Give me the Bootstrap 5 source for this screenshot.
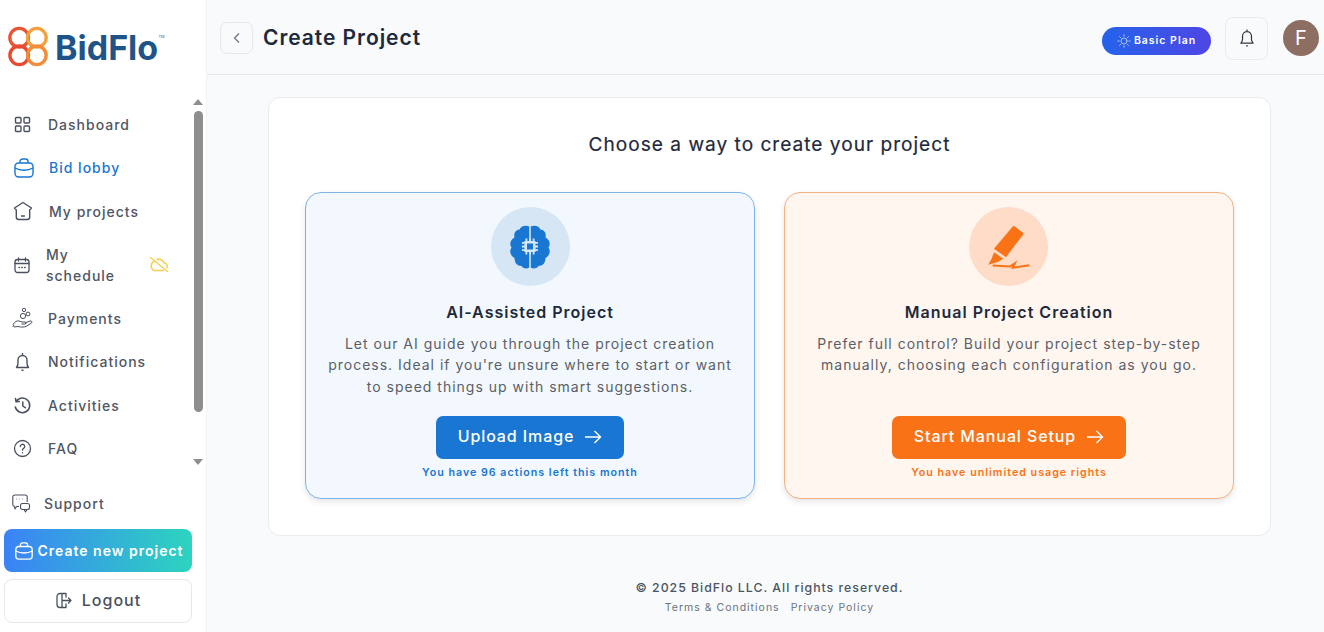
<!DOCTYPE html>
<html lang="en"><head><meta charset="utf-8"><title>Create Project</title>
<link href="https://cdn.jsdelivr.net/npm/bootstrap@5.3.0/dist/css/bootstrap.min.css" rel="stylesheet">
<style>
html,body{height:100%;overflow:hidden}
body{font-family:Inter,"Liberation Sans",sans-serif;background:#f8fafc;color:#1e293b;letter-spacing:1px}
svg{flex:none;display:block}
.side{width:207px;flex:none;height:632px;background:#fff;border-right:1px solid #f1f3f6}
.logo-row{height:97px;padding:26px 0 0 8px;gap:7px}
.logo-word{font-family:Inter,sans-serif;font-weight:700;font-size:34px;line-height:44px;color:#1f5488;letter-spacing:0;position:relative}
.logo-word sup{position:absolute;right:-6.500px;top:9px;font-size:4px;font-weight:400;line-height:1;color:#555}
.nav-area{height:371px;padding-left:13px}
.nav-col{width:174px;padding-top:5.500px}
.nav-entry{height:43.500px;font-size:14px;font-weight:500;color:#505664;gap:16px;text-decoration:none}
.nav-entry.tall{height:63.600px;line-height:21px;gap:15px}
.nav-entry.active{color:#1976d2;gap:14px}
.nav-entry.pay{gap:15px}
.nav-entry .off{margin-left:auto;margin-right:18px}
.ic-out{margin-left:-1px}
.sb{width:12px;margin-left:5px;margin-right:1px;padding-top:2px}
.sb-up{width:0;height:0;border:5px solid transparent;border-top:0;border-bottom:6px solid #8e8e8e;margin:0 auto 6px}
.sb-thumb{width:9px;height:301px;background:#8e8e8e;border-radius:5px;margin:0 auto 47px}
.sb-down{width:0;height:0;border:5px solid transparent;border-bottom:0;border-top:6px solid #8e8e8e;margin:0 auto}
.support{height:36px;margin-top:17px;padding-left:12px;gap:14px;font-size:14px;font-weight:500;color:#505664}
.new-btn,.out-btn{width:188px;margin-left:4px;border-radius:8px;display:flex;align-items:center;justify-content:center;letter-spacing:1px}
.new-btn{height:43px;margin-top:8px;background:linear-gradient(90deg,#3b82f6,#2dd4bf);color:#fff;font-size:14px;font-weight:600;gap:3px;border:0;padding:0 0 0 2px}
.out-btn{height:44px;margin-top:7px;background:#fff;border:1px solid #e5e7eb;color:#4a5060;font-size:16px;font-weight:500;gap:10px;padding:0 0 2px}
.top{height:75px;border-bottom:1px solid #e5e7eb;padding:0 5px 0 13px}
.back{width:33px;height:32px;border:1px solid #e5e7eb;border-radius:7px;background:#f8fafc;margin-top:1px}
.page-title{font-size:21px;font-weight:600;color:#1e293b;margin:0 0 0 10px;line-height:1.2;position:relative;top:1px;letter-spacing:.95px}
.plan{width:109px;height:28px;border-radius:14px;background:linear-gradient(90deg,#2563eb,#4f46e5);color:#fff;font-size:10.500px;font-weight:600;gap:3px;margin-top:7px}
.bell{width:43px;height:43px;border:1px solid #e9ebef;border-radius:8px;margin:2px 15px 0 14px;background:#f8fafc}
.avatar{width:36px;height:36px;border-radius:50%;background:#8d6e63;color:#fff;font-size:20px;letter-spacing:0;margin-top:2px}
.panel{width:1003px;height:439px;margin:22px 0 0 61px;background:#fff;border:1px solid #e8ebf0;border-radius:12px;padding:0 36px}
.panel-h{font-size:19.100px;font-weight:400;color:#1e293b;text-align:center;line-height:24px;margin:34px 0 36px;-webkit-text-stroke:.2px #1e293b}
.opt{width:450px;height:307px;border-radius:16px;padding:14px 16px 0;text-align:center;box-shadow:0 3px 6px rgba(0,0,0,.1)}
.opt-blue{background:#f2f8fe;border:1px solid #7fb5e6}
.opt-orange{background:#fff6f0;border:1px solid #f3b184}
.disc{width:79px;height:79px;border-radius:50%;margin-bottom:16px}
.opt-blue .disc{background:#d6e6f4}
.opt-orange .disc{background:#fedcc8;margin-left:-1px}
.opt-t{font-size:16px;font-weight:600;line-height:20px;color:#1e293b;margin:0 0 10.500px}
.opt-d{font-size:14px;line-height:21.500px;color:#5b5f68;margin:0}
.cta{height:43px;border-radius:7px;border:0;color:#fff;font-size:16px;font-weight:500;gap:10px;padding:0 0 3px;letter-spacing:.9px;display:flex;align-items:center;justify-content:center}
.cta svg{position:relative;top:1px}
.cta-b{width:188px;background:#1976d2}
.cta-o{width:234px;background:#f97316}
.act{margin-top:auto;margin-bottom:18px}
.note{font-size:10.700px;line-height:14px;font-weight:600;margin:7px 0 0}
.note-b{color:#1976d2}.note-o{color:#f97316}
.foot{text-align:center;margin-top:43px;margin-left:61px;width:1003px}
.foot-a{font-size:12.300px;line-height:18px;font-weight:500;color:#4b5563;margin:0 0 3px}
.foot-b{font-size:10.500px;line-height:16px;color:#6b7280;gap:11px}
</style></head>
<body class="d-flex">
<aside class="side d-flex flex-column">
 <div class="logo-row d-flex align-items-start">
  <svg width="40" height="41" viewBox="0 0 43 43" fill="none" stroke-width="3.600"><circle cx="12" cy="12" r="10" stroke="#ea5430"/><circle cx="31" cy="12" r="10" stroke="#f5a03c"/><circle cx="12" cy="31" r="10" stroke="#e84a30"/><circle cx="31" cy="31" r="10" stroke="#f38b38"/></svg>
  <span class="logo-word">BidFlo<sup>TM</sup></span>
 </div>
 <div class="nav-area d-flex">
  <nav class="nav-col">
   <a class="nav-entry d-flex align-items-center" href="#"><svg width="19" height="19" viewBox="0 0 19 19" fill="none" stroke="#4a5060" stroke-width="1.400"><rect x="2.500" y="2.500" width="5.500" height="5.500" rx="1"/><rect x="11" y="2.500" width="5.500" height="5.500" rx="1"/><rect x="2.500" y="11" width="5.500" height="5.500" rx="1"/><rect x="11" y="11" width="5.500" height="5.500" rx="1"/></svg>Dashboard</a>
   <a class="nav-entry active d-flex align-items-center" href="#"><svg width="22" height="22" viewBox="0 0 22 22" fill="none" stroke="#1976d2" stroke-width="1.400"><rect x="2" y="6" width="18" height="14" rx="3.500"/><path d="M7 6V4.500A2.500 2.500 0 0 1 9.500 2h3A2.500 2.500 0 0 1 15 4.500V6M2 11c5 3 13 3 18 0"/></svg>Bid lobby</a>
   <a class="nav-entry d-flex align-items-center" href="#"><svg width="20" height="20" viewBox="0 0 20 20" fill="none" stroke="#4a5060" stroke-width="1.400" stroke-linejoin="round"><path d="M10 1.500 18.500 7l-1.800 2v7a2.500 2.500 0 0 1-2.500 2.500H5.800A2.500 2.500 0 0 1 3.300 16V9L1.500 7z"/><path d="M8.500 15h3" stroke-linecap="round"/></svg>My projects</a>
   <a class="nav-entry tall d-flex align-items-center" href="#"><svg width="18" height="18" viewBox="0 0 18 18" fill="none" stroke="#4a5060" stroke-width="1.300" stroke-linecap="round"><rect x="2" y="3.500" width="14" height="13" rx="2.500"/><path d="M2 7.500h14M5.500 2v3M12.500 2v3M6 11.500h.6M8.800 11.500h.6M11.600 11.500h.6"/></svg><span>My<br>schedule</span><svg class="off" width="20" height="20" viewBox="0 0 20 20" fill="none" stroke="#f7cf4e" stroke-width="1.500" stroke-linecap="round" stroke-linejoin="round"><path d="M5 6.500A5 5 0 0 0 5 15.500h9.500M8 4.500a5.300 5.300 0 0 1 7 3.500 3.500 3.500 0 0 1 3 5M1.500 2.500l17 14"/></svg></a>
   <a class="nav-entry pay d-flex align-items-center" href="#"><svg class="ic-out" width="21" height="22" viewBox="0 0 21 22" fill="none" stroke="#4a5060" stroke-width="1" stroke-linejoin="round"><circle cx="12" cy="3" r="1.700"/><circle cx="11" cy="9" r="2.600"/><circle cx="16" cy="7" r="1.900"/><path d="M1 17.500c2-3 4-4 6-3.500l3 1h3a1 1 0 0 1 0 2H9.500M13 16l5-2c1.500-.5 2.500 1 1.500 2L14 19.500c-2 .8-5 .8-8 0l-4 .5M1 20l1-2.500"/></svg>Payments</a>
   <a class="nav-entry d-flex align-items-center" href="#"><svg width="19" height="20" viewBox="0 0 19 20" fill="none" stroke="#4a5060" stroke-width="1.400" stroke-linecap="round" stroke-linejoin="round"><path d="M3.500 15.500c1-1.300 1.500-2 1.500-4.500V8a4.500 4.500 0 0 1 9 0v3c0 2.500.5 3.200 1.500 4.500zM9.500 1.500v2M9 18.300h1"/></svg>Notifications</a>
   <a class="nav-entry d-flex align-items-center" href="#"><svg width="19" height="19" viewBox="0 0 19 19" fill="none" stroke="#4a5060" stroke-width="1.500" stroke-linecap="round" stroke-linejoin="round"><path d="M3.200 5.500A7.300 7.300 0 1 1 2.300 11M2.500 2.500l.5 3.300 3.300-.4M9.800 6v4l2.700 1.800"/></svg>Activities</a>
   <a class="nav-entry d-flex align-items-center" href="#"><svg width="19" height="19" viewBox="0 0 19 19" fill="none" stroke="#4a5060" stroke-width="1.300" stroke-linecap="round"><circle cx="9.500" cy="9.500" r="8"/><path d="M7.300 7.500a2.200 2.200 0 1 1 3.300 1.900c-.8.400-1.100.9-1.100 1.800M9.500 13.700v.1"/></svg>FAQ</a>
  </nav>
  <div class="sb"><div class="sb-up"></div><div class="sb-thumb"></div><div class="sb-down"></div></div>
 </div>
 <div class="support d-flex align-items-center"><svg width="18" height="19" viewBox="0 0 18 19" fill="none" stroke="#4a5060" stroke-width="1.100" stroke-linejoin="round"><path d="M7 12.500H4.500L3 15l-.5-2.500A2 2 0 0 1 .8 10.500V3A2 2 0 0 1 2.800 1h10.400a2 2 0 0 1 2 2v5"/><rect x="8.500" y="9.500" width="9" height="6" rx="2"/><path d="M12 15.500l1.500 2.500 1.500-2.500M4.500 5h.6M7.500 5h.6M10.500 5h.6"/></svg>Support</div>
 <button class="new-btn"><svg width="20" height="20" viewBox="0 0 22 22" fill="none" stroke="#fff" stroke-width="1.500"><rect x="2" y="6" width="18" height="14" rx="3.500"/><path d="M7 6V4.500A2.500 2.500 0 0 1 9.500 2h3A2.500 2.500 0 0 1 15 4.500V6M2 11c5 3 13 3 18 0"/></svg>Create new project</button>
 <button class="out-btn"><svg width="17" height="19" viewBox="0 0 17 19" fill="none" stroke="#4a5060" stroke-width="1.300" stroke-linecap="round" stroke-linejoin="round"><path d="M6 2.500H5A3 3 0 0 0 2 5.500v8a3 3 0 0 0 3 3h1c.6 0 1-.4 1-1v-12c0-.6-.4-1-1-1zM7 2.500h4v3.500M7 16.500h4V13M8 9.500h8M13.500 7l2.500 2.500L13.500 12"/></svg>Logout</button>
</aside>
<main class="flex-grow-1">
 <header class="top d-flex align-items-center">
  <div class="back d-flex align-items-center justify-content-center"><svg width="10" height="12" viewBox="0 0 10 12" fill="none" stroke="#6b7280" stroke-width="1.200"><path d="M7 1.500 2.500 6 7 10.500"/></svg></div>
  <h1 class="page-title">Create Project</h1>
  <div class="plan d-flex align-items-center justify-content-center ms-auto"><svg width="14" height="14" viewBox="0 0 14 14" fill="none" stroke="#bcd0ff" stroke-width=".9" stroke-linecap="round"><circle cx="7" cy="7" r="3"/><path d="M7 .8v1.400M7 11.800v1.400M.8 7h1.400M11.800 7h1.400M2.600 2.600l1 1M10.400 10.400l1 1M11.400 2.600l-1 1M3.600 10.400l-1 1"/></svg>Basic Plan</div>
  <div class="bell d-flex align-items-center justify-content-center"><svg width="18" height="20" viewBox="0 0 19 20" fill="none" stroke="#333844" stroke-width="1.300" stroke-linecap="round" stroke-linejoin="round"><path d="M3 15.500c1-1.300 1.800-2 1.800-4.500V8a4.700 4.700 0 0 1 9.400 0v3c0 2.500.8 3.200 1.800 4.500zM9.500 1.500v1.500M9 18.300h1"/></svg></div>
  <div class="avatar d-flex align-items-center justify-content-center">F</div>
 </header>
 <section class="panel">
  <h2 class="panel-h">Choose a way to create your project</h2>
  <div class="d-flex justify-content-between">
   <article class="opt opt-blue d-flex flex-column align-items-center">
    <div class="disc d-flex align-items-center justify-content-center"><svg width="42" height="44" viewBox="0 0 42 44"><g fill="#1976d2"><path d="M20.200 1.500C17 .2 12.500.5 10.500 4.500 6.500 4.800 4.500 8.500 5.500 12.500 1.500 14.500 0 19 2.500 22.500 0 26 1.500 31 5.500 33 5.500 38 8.500 41 12.500 41 14.500 44 18.500 44 20.200 42.500z"/><path d="M21.800 1.500C25 .2 29.500.5 31.500 4.500 35.500 4.800 37.500 8.500 36.500 12.500 40.500 14.500 42 19 39.500 22.500 42 26 40.500 31 36.500 33 36.500 38 33.500 41 29.500 41 27.500 44 23.500 44 21.800 42.500z"/></g><g fill="#d6e6f4"><rect x="15.500" y="16" width="11" height="11"/><path d="M16.500 13.500h1.800v3h-1.800zM20.100 13.500h1.800v3h-1.800zM23.700 13.500h1.800v3h-1.800zM16.500 26.500h1.800v3h-1.800zM20.100 26.500h1.800v3h-1.800zM23.700 26.500h1.800v3h-1.800zM13 17h3v1.800h-3zM13 20.600h3v1.800h-3zM13 24.200h3v1.800h-3zM26 17h3v1.800h-3zM26 20.600h3v1.800h-3zM26 24.200h3v1.800h-3z"/></g><rect x="18" y="18.500" width="6" height="6" fill="#1976d2"/></svg></div>
    <h3 class="opt-t">AI-Assisted Project</h3>
    <p class="opt-d">Let our AI guide you through the project creation process. Ideal if you're unsure where to start or want to speed things up with smart suggestions.</p>
    <div class="act"><button class="cta cta-b mx-auto">Upload Image <svg width="18" height="14" viewBox="0 0 18 14" fill="none" stroke="#fff" stroke-width="1.400"><path d="M1 7h15.500M10.500 1l6 6-6 6"/></svg></button><p class="note note-b">You have 96 actions left this month</p></div>
   </article>
   <article class="opt opt-orange d-flex flex-column align-items-center">
    <div class="disc d-flex align-items-center justify-content-center"><svg width="44" height="46" viewBox="0 0 44 46"><path fill="#f97316" d="M25.500 2.800c.7-.8 1.500-.9 2.300-.3l7.800 6c.9.700 1 1.500.3 2.400L19 33.200 7 24.800z"/><path fill="#f97316" d="M7 28.200l9.300 6.600-5.500 3.200-9.500 2.800 3.500-6.500z"/><path fill="none" stroke="#f97316" stroke-width="2" d="M5.700 41.500 23 42.500 28 39.200 25.700 43.800 42.300 41.200"/></svg></div>
    <h3 class="opt-t">Manual Project Creation</h3>
    <p class="opt-d">Prefer full control? Build your project step-by-step manually, choosing each configuration as you go.</p>
    <div class="act"><button class="cta cta-o mx-auto">Start Manual Setup <svg width="18" height="14" viewBox="0 0 18 14" fill="none" stroke="#fff" stroke-width="1.400"><path d="M1 7h15.500M10.500 1l6 6-6 6"/></svg></button><p class="note note-o">You have unlimited usage rights</p></div>
   </article>
  </div>
 </section>
 <footer class="foot">
  <p class="foot-a">© 2025 BidFlo LLC. All rights reserved.</p>
  <div class="foot-b d-flex justify-content-center"><span>Terms &amp; Conditions</span><span>Privacy Policy</span></div>
 </footer>
</main>
</body></html>
